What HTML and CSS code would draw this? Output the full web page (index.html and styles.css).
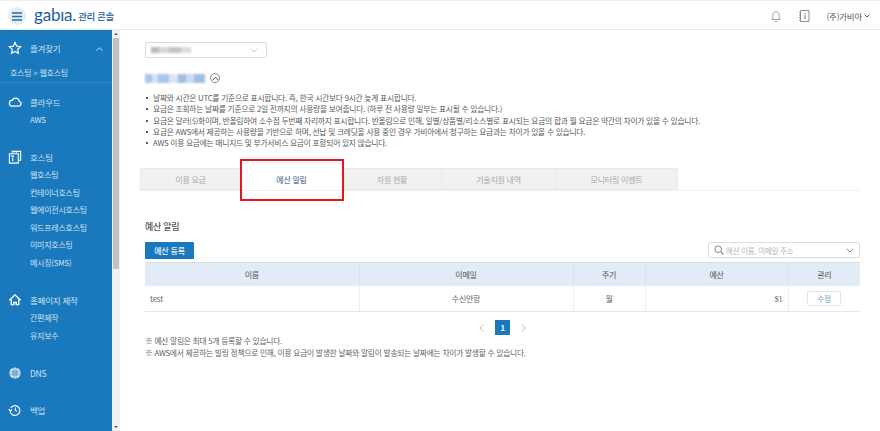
FILE: index.html
```html
<!DOCTYPE html>
<html lang="ko">
<head>
<meta charset="utf-8">
<title>gabia 관리 콘솔</title>
<link rel="stylesheet" href="styles.css">
</head>
<body>
<div class="app">
  <header class="topbar">
    <button class="menu-btn" aria-label="menu">
      <svg width="10" height="9" viewBox="0 0 10 9"><path d="M0 1h10M0 4.500h10M0 8h10" stroke="#1b6fae" stroke-width="1.400" fill="none"/></svg>
    </button>
    <span class="logo">gabıa.</span>
    <span class="logo-sub">관리 콘솔</span>
    <div class="top-right">
      <svg class="top-icon" width="12" height="13" viewBox="0 0 14 14"><path d="M7 1.500c-2.400 0-3.700 1.800-3.700 4v2.800L2 10.500h10l-1.300-2.200V5.500c0-2.200-1.300-4-3.700-4zM5.600 12c.3.8.8 1.100 1.400 1.100s1.100-.3 1.400-1.100" fill="none" stroke="#8a8f94" stroke-width="1"/></svg>
      <svg class="top-icon gap-icon" width="12" height="14" viewBox="0 0 12 14"><path d="M2.500 1.500h8.500v11H2.500zM1 3.500h2M1 6h2M1 8.500h2M1 11h2" fill="none" stroke="#8a8f94" stroke-width="1"/><path d="M7 6v4M7 4v1" stroke="#6d7277" stroke-width="1"/></svg>
      <span class="account">(주)가비아 <svg width="6" height="4" viewBox="0 0 6 4"><path d="M.5.500 3 3 5.500.500" fill="none" stroke="#555" stroke-width="1"/></svg></span>
    </div>
  </header>
  <div class="body">
    <nav class="sidebar">
      <div class="nav-head">
        <svg class="nav-icon" viewBox="0 0 15 15"><path d="M7.500 1.500 9.300 5.500l4.200.5-3.100 2.900.8 4.300-3.700-2.100-3.700 2.100.8-4.300L1.500 6l4.200-.5z" fill="none" stroke="#fff" stroke-width="1.300"/></svg>
        <span>즐겨찾기</span>
        <svg class="nav-caret" width="7" height="4" viewBox="0 0 7 4"><path d="M.5 3.500 3.500.8l3 2.700" fill="none" stroke="#cfe3f2" stroke-width="1"/></svg>
      </div>
      <div class="crumb">호스팅 &gt; 웹호스팅</div>
      <div class="nav-group g-cloud">
        <div class="nav-head">
          <svg class="nav-icon" viewBox="0 0 15 15"><path d="M4 12h7.500a2.700 2.700 0 0 0 .5-5.300A3.800 3.800 0 0 0 4.800 5.500 3.300 3.300 0 0 0 4 12z" fill="none" stroke="#fff" stroke-width="1.300"/></svg>
          <span>클라우드</span>
        </div>
        <a class="nav-item">AWS</a>
      </div>
      <div class="nav-group g-host">
        <div class="nav-head">
          <svg class="nav-icon" viewBox="0 0 15 15"><path d="M4.500 3V1.500h9v9.500H11M1.500 4h9.500v10h-9.500z" fill="none" stroke="#fff" stroke-width="1.200"/><path d="M3 6.500h3.500M5 8v4" stroke="#fff" stroke-width="1.200" fill="none"/><path d="M6.500 1.500v1.500M9 1.500v1.500" stroke="#fff" stroke-width="1"/></svg>
          <span>호스팅</span>
        </div>
        <a class="nav-item">웹호스팅</a>
        <a class="nav-item">컨테이너호스팅</a>
        <a class="nav-item">웹에이전시호스팅</a>
        <a class="nav-item">워드프레스호스팅</a>
        <a class="nav-item">이미지호스팅</a>
        <a class="nav-item">메시징(SMS)</a>
      </div>
      <div class="nav-group g-home">
        <div class="nav-head">
          <svg class="nav-icon" viewBox="0 0 15 15"><path d="M1.500 7.800 7.500 2l6 5.800M3.500 7v5.500h2.700V10h2.600v2.500h2.700V7" fill="none" stroke="#fff" stroke-width="1.500"/></svg>
          <span>홈페이지 제작</span>
        </div>
        <a class="nav-item">간편제작</a>
        <a class="nav-item">유지보수</a>
      </div>
      <div class="nav-group g-dns">
        <div class="nav-head">
          <svg class="nav-icon" viewBox="0 0 15 15"><circle cx="7.500" cy="7.500" r="6" fill="#fff"/><path d="M2 5.500h11M2 7.500h11M2 9.500h11M5.500 2v11M7.500 2v11M9.500 2v11" stroke="#1a78bd" stroke-width=".7"/></svg>
          <span>DNS</span>
        </div>
      </div>
      <div class="nav-group g-backup">
        <div class="nav-head">
          <svg class="nav-icon" viewBox="0 0 15 15"><path d="M3 5.200a5.300 5.300 0 1 1-.8 3.300M.8 6.500l1.700 2 2-1.700" fill="none" stroke="#fff" stroke-width="1.300"/><path d="M7.800 4.800v3.200l2 1" fill="none" stroke="#fff" stroke-width="1.100"/></svg>
          <span>백업</span>
        </div>
      </div>
    </nav>
    <div class="scrollbar">
      <span class="arrow up"></span>
      <span class="thumb"></span>
      <span class="arrow down"></span>
    </div>
    <main class="main">
      <div class="select-box">
        <span class="blur blur-a"></span>
        <svg width="8" height="5" viewBox="0 0 8 5"><path d="M.8.8 4 4l3.200-3.200" fill="none" stroke="#c4c8cc" stroke-width="1"/></svg>
      </div>
      <div class="title-row">
        <span class="blur blur-b"></span>
        <span class="collapse"><svg width="7" height="5" viewBox="0 0 7 5"><path d="M.8 4 3.500 1.200 6.200 4" fill="none" stroke="#444" stroke-width="1"/></svg></span>
      </div>
      <ul class="notes">
        <li>날짜와 시간은 UTC를 기준으로 표시합니다. 즉, 한국 시간보다 9시간 늦게 표시합니다.</li>
        <li>요금은 조회하는 날짜를 기준으로 2일 전까지의 사용량을 보여줍니다. (하루 전 사용량 일부는 표시될 수 있습니다.)</li>
        <li>요금은 달러($)화이며, 반올림하여 소수점 두번째 자리까지 표시합니다. 반올림으로 인해, 일별/상품별/리소스별로 표시되는 요금의 합과 월 요금은 약간의 차이가 있을 수 있습니다.</li>
        <li>요금은 AWS에서 제공하는 사용량을 기반으로 하며, 선납 및 크레딧을 사용 중인 경우 가비아에서 청구하는 요금과는 차이가 있을 수 있습니다.</li>
        <li>AWS 이용 요금에는 매니지드 및 부가서비스 요금이 포함되어 있지 않습니다.</li>
      </ul>
      <div class="tabs">
        <a class="tab t1">이용 요금</a>
        <a class="tab t2 active">예산 알림</a>
        <a class="tab t3">자원 현황</a>
        <a class="tab t4">기술지원 내역</a>
        <a class="tab t5">모니터링 이벤트</a>
        <span class="highlight"></span>
      </div>
      <section class="panel">
        <h2 class="panel-title">예산 알림</h2>
        <div class="toolbar">
          <button class="primary">예산 등록</button>
          <div class="search">
            <svg width="10" height="10" viewBox="0 0 10 10"><circle cx="4.200" cy="4.200" r="3.300" fill="none" stroke="#7b8186" stroke-width="1"/><path d="M6.700 6.700 9.500 9.500" stroke="#7b8186" stroke-width="1.100"/></svg>
            <span class="placeholder">예산 이름, 이메일 주소</span>
            <svg class="search-caret" width="8" height="5" viewBox="0 0 8 5"><path d="M.8.8 4 4l3.200-3.200" fill="none" stroke="#8a8f94" stroke-width="1"/></svg>
          </div>
        </div>
        <table class="grid">
          <colgroup>
            <col class="c1"><col class="c2"><col class="c3"><col class="c4"><col class="c5">
          </colgroup>
          <thead>
            <tr><th>이름</th><th>이메일</th><th>주기</th><th>예산</th><th>관리</th></tr>
          </thead>
          <tbody>
            <tr>
              <td class="left">test</td>
              <td>수신안함</td>
              <td>월</td>
              <td class="right">$1</td>
              <td><button class="edit">수정</button></td>
            </tr>
          </tbody>
        </table>
        <div class="pager">
          <svg width="5" height="8" viewBox="0 0 5 8"><path d="M4 .8.8 4 4 7.200" fill="none" stroke="#b5b9bd" stroke-width="1"/></svg>
          <span class="page">1</span>
          <svg width="5" height="8" viewBox="0 0 5 8"><path d="M1 .8 4.200 4 1 7.200" fill="none" stroke="#b5b9bd" stroke-width="1"/></svg>
        </div>
        <p class="foot">※ 예산 알림은 최대 5개 등록할 수 있습니다.</p>
        <p class="foot">※ AWS에서 제공하는 빌링 정책으로 인해, 이용 요금이 발생한 날짜와 알림이 발송되는 날짜에는 차이가 발생할 수 있습니다.</p>
      </section>
    </main>
  </div>
</div>
</body>
</html>
```
FILE: styles.css
```css
* { box-sizing: border-box; }
html, body { margin: 0; padding: 0; height: 431px; overflow: hidden; background: #fff; }
body { font-family: "Noto Sans CJK KR", "Noto Sans", "Liberation Sans", sans-serif; font-size: 8px; letter-spacing: -0.25px; color: #5f5f5f; }
.app { width: 880px; height: 431px; display: flex; flex-direction: column; }

.topbar { height: 30px; flex: none; display: flex; align-items: center; padding: 2px 0 0 8px; background: #fff; border-top: 1px solid #eee; border-bottom: 1px solid #e8e8e8; }
.menu-btn { width: 18px; height: 18px; padding: 0; border: 0; border-radius: 50%; background: #e9ecef; display: flex; align-items: center; justify-content: center; }
.logo { margin-left: 8px; font-family: "Lato", sans-serif; font-size: 17px; line-height: 20px; letter-spacing: -0.2px; color: #1c5f9e; transform: translateY(-1px); }
.logo-sub { margin-left: 2px; font-size: 9.500px; font-weight: 500; letter-spacing: -0.4px; color: #1c5f9e; }
.top-right { margin-left: auto; display: flex; align-items: center; padding-right: 10px; }
.gap-icon { margin-left: 16px; }
.account { margin-left: 16px; font-size: 8.500px; color: #555; display: flex; align-items: center; gap: 2px; }

.body { flex: 1; display: flex; min-height: 0; }
.sidebar { width: 112px; flex: none; background: #1a78bd; color: #cfe4f3; padding-top: 9px; }
.nav-head { height: 18px; display: flex; align-items: center; padding-left: 8px; position: relative; font-size: 8.500px; }
.nav-icon { flex: none; width: 14px; height: 14px; margin-right: 8px; }
.nav-caret { position: absolute; left: 96px; top: 8px; }
.crumb { margin-top: 8px; height: 18px; padding: 2px 0 0 10px; font-size: 8px; line-height: 12px; border-bottom: 1px solid #2f87c6; }
.nav-item { display: block; height: 17.500px; line-height: 17.500px; padding-left: 30px; font-size: 8px; white-space: nowrap; }
.g-cloud { margin-top: 10px; }
.g-host { margin-top: 19.500px; }
.g-home { margin-top: 20px; }
.g-dns { margin-top: 20px; }
.g-backup { margin-top: 19px; }

.scrollbar { width: 8px; flex: none; background: #f1f1f1; display: flex; flex-direction: column; align-items: center; }
.arrow { flex: none; height: 8px; width: 8px; position: relative; }
.arrow.up::after, .arrow.down::after { content: ""; position: absolute; left: 2px; border-left: 2px solid transparent; border-right: 2px solid transparent; }
.arrow.up::after { top: 3px; border-bottom: 2px solid #555; }
.arrow.down::after { top: 3px; border-top: 2px solid #555; }
.thumb { width: 6px; height: 231px; background: #c1c1c1; flex: none; }
.arrow.down { margin-top: auto; }

.main { flex: 1; min-width: 0; padding: 12px 20px 0 20px; position: relative; }
.blur { display: block; filter: blur(1px); }
.select-box { margin-left: 5px; width: 122px; height: 16px; border: 1px solid #ddd; border-radius: 2px; display: flex; align-items: center; justify-content: space-between; padding: 0 8px 0 5px; }
.blur-a { width: 40px; height: 6px; background: linear-gradient(90deg, #bbb 0 20%, #d8d8d8 20% 45%, #c4c4c4 45% 75%, #ddd 75%); }
.title-row { margin: 14px 0 0 5px; height: 12px; display: flex; align-items: center; gap: 5px; }
.blur-b { width: 60px; height: 9px; background: linear-gradient(90deg, #a9c6e6 0 12%, #d5e2f0 12% 22%, #a9c6e6 22% 40%, #dbe6f2 40% 55%, #9fbfe0 55% 68%, #c9dbee 68% 82%, #9fbfe0 82%); }
.collapse { width: 10px; height: 10px; border: 1px solid #888; border-radius: 50%; display: flex; align-items: center; justify-content: center; }
.notes { list-style: none; margin: 8px 0 0 5px; padding: 0; font-size: 7.750px; line-height: 11.300px; color: #5a5a5a; }
.notes li { position: relative; padding-left: 8px; white-space: nowrap; }
.notes li::before { content: ""; position: absolute; left: 1px; top: 5px; width: 2px; height: 2px; background: #555; }

.tabs { margin-top: 20px; position: relative; display: flex; height: 23px; border-bottom: 1px solid #f0f0f0; }
.tab { flex: none; display: flex; align-items: center; justify-content: center; background: #f1f1f1; border: 1px solid #e9e9e9; border-left-width: 0; color: #a8a8a8; font-size: 8px; }
.t1 { width: 101px; border-left-width: 1px; }
.t2 { width: 102px; }
.t3 { width: 99px; }
.t4 { width: 114px; }
.t5 { width: 122px; }
.tab.active { background: #fff; color: #6b7fa0; font-weight: 500; border-color: #fff; }
.highlight { position: absolute; left: 100px; top: -9px; width: 104px; height: 42px; border: 2px solid #e5141e; }

.panel { padding: 0 0 0 5px; }
.panel-title { margin: 29px 0 0; font-size: 9px; line-height: 14px; font-weight: 500; color: #555; }
.toolbar { margin-top: 8px; display: flex; justify-content: space-between; align-items: flex-start; height: 20px; }
.primary { width: 49px; height: 17px; padding: 0; border: 0; border-radius: 1px; background: #1a78bd; color: #e6f1f9; font: 500 8px "Noto Sans CJK KR", sans-serif; letter-spacing: -0.2px; }
.search { width: 152px; height: 16px; border: 1px solid #ddd; border-radius: 2px; display: flex; align-items: center; padding: 0 5px; gap: 2px; }
.placeholder { font-size: 7.500px; color: #b4b8bc; }
.search-caret { margin-left: auto; }

.grid { width: 715px; table-layout: fixed; border-collapse: collapse; border-top: 1px solid #d5dde6; }
.c1 { width: 214px; } .c2 { width: 214px; } .c3 { width: 72px; } .c4 { width: 143px; } .c5 { width: 72px; }
.grid th { height: 23px; padding: 0; background: #e2ecf6; font-weight: 400; font-size: 8px; color: #555; border-left: 1px solid #d9e4ef; }
.grid th:first-child, .grid td:first-child { border-left: 0; }
.grid td { height: 26px; padding: 0 5px; text-align: center; font-size: 8px; color: #666; border-left: 1px solid #eee; border-bottom: 1px solid #e6e6e6; }
.grid td.left { text-align: left; }
.grid td.right { text-align: right; font-family: "Liberation Serif", serif; font-size: 8.500px; }
.edit { width: 34px; height: 15px; padding: 0; background: #fff; border: 1px solid #e4e4e4; border-radius: 2px; color: #6f9cc4; font: 7.500px "Noto Sans CJK KR", sans-serif; }

.pager { margin-top: 8px; display: flex; align-items: center; justify-content: center; gap: 11px; height: 15px; }
.page { width: 15px; height: 15px; background: #1a78bd; color: #fff; font-size: 7.500px; font-weight: 700; display: flex; align-items: center; justify-content: center; }
.foot { margin: 0; font-size: 7.750px; line-height: 12px; color: #5f5f5f; white-space: nowrap; }
```
